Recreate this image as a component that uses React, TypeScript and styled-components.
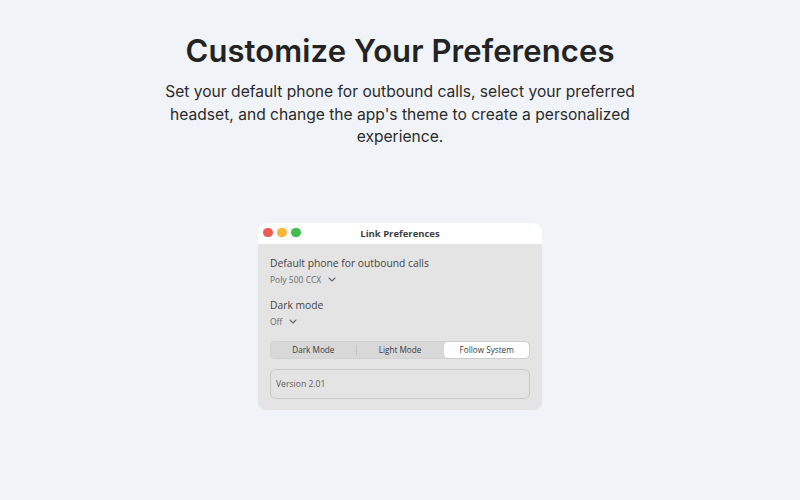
import React, { useState } from 'react'
import styled, { createGlobalStyle } from 'styled-components'

//Global
const GlobalStyle = createGlobalStyle`
html, body {
  margin: 0;
  padding: 0;
  background-color: #f0f4f9;
}
body {
  font-family: Inter, "Noto Sans", sans-serif;
}
`
//Components
const Page = styled.div`
display: flex;
flex-direction: column;
align-items: center;
width: 800px;
height: 500px;
padding-top: 29px;
box-sizing: border-box;
background-color: #f0f4f9;
`
const Heading = styled.h1`
margin: 0;
font-family: Inter, sans-serif;
font-size: 31px;
font-weight: 600;
letter-spacing: 0.1px;
line-height: 44px;
color: #232323;
`
const Lead = styled.p`
margin: 8px 0 0 0;
width: 480px;
text-align: center;
font-family: Inter, sans-serif;
font-size: 15.6px;
line-height: 22.5px;
color: #2b2b2b;
`
const Window = styled.div`
margin-top: 74px;
width: 284px;
border-radius: 8px;
overflow: hidden;
background-color: #e4e4e4;
font-family: "Open Sans", sans-serif;
box-shadow: 0 0 1px rgba(0, 0, 0, 0.06);
`
const TitleBar = styled.div`
position: relative;
display: flex;
align-items: center;
justify-content: center;
height: 21px;
background-color: #ffffff;
`
const Lights = styled.div`
position: absolute;
left: 5px;
top: 5px;
display: flex;
gap: 4.5px;
`
const Light = styled.span<{ $color: string }>`
width: 9.5px;
height: 9.5px;
border-radius: 50%;
background-color: ${p => p.$color};
`
const Title = styled.span`
font-size: 9.5px;
font-weight: 700;
color: #3f3f3f;
`
const Body = styled.div`
display: flex;
flex-direction: column;
padding: 11px 12px 11px 12px;
`
const Field = styled.div`
display: flex;
flex-direction: column;
margin-bottom: 10px;
`
const Label = styled.span`
font-size: 10.3px;
line-height: 16px;
color: #454545;
`
const Select = styled.span`
display: flex;
align-items: center;
gap: 7px;
margin-top: 2px;
font-size: 8.5px;
line-height: 14px;
color: #6a6a6a;
`
const Segments = styled.div`
display: flex;
height: 18px;
margin-top: 2px;
border-radius: 5px;
background-color: #d8d8d8;
box-shadow: inset 0 0 0 1px #d2d2d2;
`
const Segment = styled.button<{ $active?: boolean; $divider?: boolean }>`
flex: 1;
display: flex;
align-items: center;
justify-content: center;
margin: 1px;
padding: 0;
border: none;
border-radius: 4px;
font-family: "Open Sans", sans-serif;
font-size: 8.2px;
color: #3a3a3a;
background-color: ${p => (p.$active ? '#ffffff' : 'transparent')};
box-shadow: ${p => (p.$active ? '0 0 1px rgba(0,0,0,0.2)' : 'none')};
position: relative;
&::after {
  content: '';
  display: ${p => (p.$divider ? 'block' : 'none')};
  position: absolute;
  right: -1px;
  top: 3px;
  bottom: 3px;
  width: 1px;
  background-color: #c4c4c4;
}
`
const VersionBox = styled.div`
display: flex;
align-items: center;
height: 30px;
margin-top: 10px;
padding: 0 5px;
box-sizing: border-box;
border: 1px solid #c9c9c9;
border-radius: 6px;
font-size: 8.6px;
color: #5a5a5a;
`

const Chevron = () => (
  <svg width="8" height="5" viewBox="0 0 8 5" fill="none">
    <path d="M1 1l3 3 3-3" stroke="#666" strokeWidth="1.1" strokeLinecap="round" strokeLinejoin="round" />
  </svg>
)

export default function App() {
  const [mode, setMode] = useState('Follow System')
  const modes = ['Dark Mode', 'Light Mode', 'Follow System']

  return (
    <Page>
      <GlobalStyle />
      <Heading>Customize Your Preferences</Heading>
      <Lead>
        Set your default phone for outbound calls, select your preferred headset, and change the app's theme to create a personalized experience.
      </Lead>
      <Window>
        <TitleBar>
          <Lights>
            <Light $color="#ee5b55" />
            <Light $color="#f6b637" />
            <Light $color="#3fbf4a" />
          </Lights>
          <Title>Link Preferences</Title>
        </TitleBar>
        <Body>
          <Field>
            <Label>Default phone for outbound calls</Label>
            <Select>Poly 500 CCX <Chevron /></Select>
          </Field>
          <Field>
            <Label>Dark mode</Label>
            <Select>Off <Chevron /></Select>
          </Field>
          <Segments>
            {modes.map((m, i) => (
              <Segment
                key={m}
                $active={mode === m}
                $divider={i === 0}
                onClick={() => setMode(m)}
              >
                {m}
              </Segment>
            ))}
          </Segments>
          <VersionBox>Version 2.01</VersionBox>
        </Body>
      </Window>
    </Page>
  )
}
